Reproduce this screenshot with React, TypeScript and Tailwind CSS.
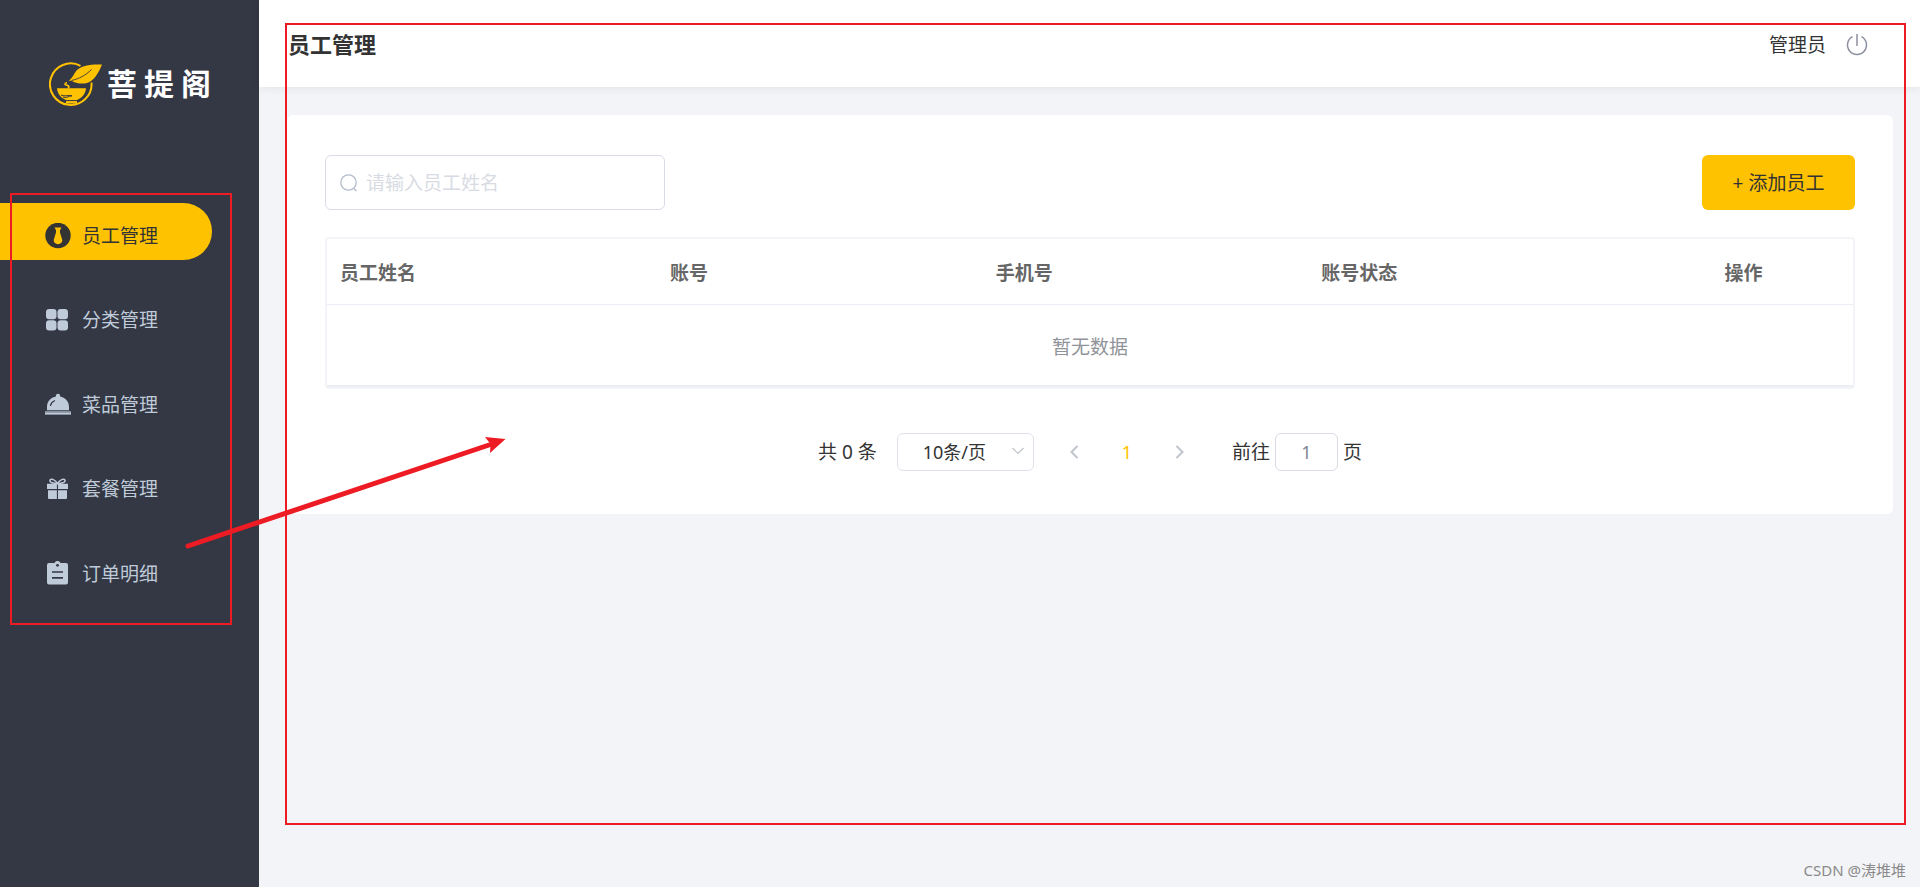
import { useState } from "react";

const menu = [
  { id: "member", name: "员工管理", icon: <TieIcon /> },
  { id: "category", name: "分类管理", icon: <GridIcon /> },
  { id: "food", name: "菜品管理", icon: <DishIcon /> },
  { id: "combo", name: "套餐管理", icon: <GiftIcon /> },
  { id: "order", name: "订单明细", icon: <OrderIcon /> },
];

function TieIcon() {
  return (
    <svg viewBox="0 0 26 26" className="size-[26px]">
      <circle cx="13" cy="12.5" r="12.7" fill="#333333" />
      <path
        d="M9.500 4.500h7l-1.500 2.800v2.200l2.300 7.500c.2 2-1.400 3.700-4.300 4.300-2.900-.6-4.500-2.300-4.300-4.300L11 9.500V7.300z"
        fill="#ffc200"
      />
    </svg>
  );
}

function GridIcon() {
  return (
    <svg viewBox="0 0 26 26" className="size-[26px]" fill="currentColor">
      <rect x="1" y="2" width="10.5" height="10.2" rx="3.2" />
      <rect x="12.5" y="2" width="10.5" height="10.2" rx="3.2" />
      <rect x="1" y="13.2" width="10.5" height="10.2" rx="3.2" />
      <rect x="12.5" y="13.2" width="10.5" height="10.2" rx="3.2" />
    </svg>
  );
}

function DishIcon() {
  return (
    <svg viewBox="0 0 26 26" className="size-[26px]" fill="currentColor">
      <path d="M11 4.500a2.100 2.100 0 1 1 4 0c5.200.9 9 4.900 9 10.500v3.300H2V15C2 9.400 5.800 5.400 11 4.500z" />
      <path d="M0 20.300h26v2.300H0z" />
      <path d="M0 19h26v1H0z" opacity=".6" />
      <path d="M5.500 13.500c.5-2.300 1.700-3.800 4-4.800" fill="none" stroke="#343744" strokeWidth="1.2" strokeLinecap="round" />
    </svg>
  );
}

function GiftIcon() {
  return (
    <svg viewBox="0 0 26 26" className="size-[26px]" fill="currentColor">
      <path
        d="M12.500 7.500C10.500 3.600 5.800 2 5 4.300c-.7 2.500 3.700 3.200 7.500 3.200 3.800 0 8.200-.7 7.500-3.200-.8-2.300-5.500-.7-7.500 3.200z"
        fill="none"
        stroke="currentColor"
        strokeWidth="1.5"
      />
      <path d="M2 7.800h9.900v5.200H2zM13 7.800h10v5.200H13zM3 14.200h8.900V23H4a1 1 0 0 1-1-1zM13 14.200h9V22a1 1 0 0 1-1 1h-8z" />
    </svg>
  );
}

function OrderIcon() {
  return (
    <svg viewBox="0 0 26 26" className="size-[26px]" fill="currentColor">
      <path d="M4 2h5.500a3.200 3.200 0 0 1 6 0H21a2 2 0 0 1 2 2v17.500a2 2 0 0 1-2 2H4a2 2 0 0 1-2-2V4a2 2 0 0 1 2-2z" />
      <circle cx="12.5" cy="4.3" r="1.4" fill="#343744" />
      <path d="M7 11h11M7 16.800h11" stroke="#343744" strokeWidth="1.7" />
    </svg>
  );
}

function Logo() {
  return (
    <div className="flex items-center">
      <svg viewBox="0 0 54 44" className="h-[44px] w-[54px]">
        <path
          d="M31.500 3.800A20.800 20.800 0 1 0 42.500 20.500"
          fill="none"
          stroke="#ffc200"
          strokeWidth="2"
        />
        <path
          d="M53 2.500C43 2 33 3 28 8c-3 3-3.500 7-8.500 11 2.500-.5 4 .3 6 1.300 4 1.500 8.500 1.500 12.500.7C45 19 49.500 11 53 2.500z"
          fill="#ffc200"
        />
        <path d="M22.500 18.500c7-1.500 14-5 20-11" fill="none" stroke="#343744" strokeWidth="0.9" />
        <path
          d="M18 20.500c-3 1-2.500 2.500.3 2.900 2 .4 2 1.600.7 3"
          fill="none"
          stroke="#ffc200"
          strokeWidth="1.7"
        />
        <path d="M8 26.300h29c-.4 5.300-3.600 9.500-9 11.700v3.500H17V38c-5.400-2.200-8.600-6.400-9-11.700z" fill="#ffc200" />
        <path d="M12 33c4 2.200 7.500-.5 11 .8-3.500.2-5.500 2.700-9 1.200M17 38.600h11" fill="none" stroke="#343744" strokeWidth="1" />
      </svg>
      <div className="ml-1 flex gap-[7px] text-[30px] leading-[44px] font-bold text-white">
        <span>菩</span>
        <span>提</span>
        <span>阁</span>
      </div>
    </div>
  );
}

// red frames and the arrow drawn over the page
function Marks() {
  return (
    <div className="pointer-events-none absolute inset-0">
      <div className="absolute top-[193px] left-[10px] h-[432px] w-[222px] border-2 border-[#ed1c24]" />
      <div className="absolute top-[23px] right-[14px] left-[285px] h-[802px] border-2 border-[#ed1c24]" />
      <svg viewBox="0 0 330 120" className="absolute top-[433px] left-[180px] h-[120px] w-[330px]">
        <path d="M8 113L309 12" stroke="#ed1c24" strokeWidth="5" strokeLinecap="round" />
        <path d="M325.500 6L305 4l5.500 7-.5 9z" fill="#ed1c24" />
      </svg>
      <p className="absolute right-[14px] bottom-[6px] text-[15px] leading-[22px] text-[#8a8a8a]">
        CSDN @涛堆堆
      </p>
    </div>
  );
}

const App = () => {
  const [active, setActive] = useState("member");
  const [name, setName] = useState("");
  const [page, setPage] = useState("1");

  return (
    <div className="relative flex min-h-screen bg-[#f3f4f7] font-['Noto_Sans','Noto_Sans_CJK_SC',sans-serif] text-[19px] leading-[28px] text-[#333333]">
      <aside className="w-[259px] shrink-0 bg-[#343744]">
        <div className="pt-[62px] pl-[49px]">
          <Logo />
        </div>
        <nav className="mt-[97px]">
          <ul className="flex h-[395px] flex-col justify-between">
            {menu.map((item) => (
              <li key={item.id}>
                <a
                  href={"#" + item.id}
                  onClick={() => setActive(item.id)}
                  className={
                    "flex h-[57px] w-[212px] items-center gap-[11px] rounded-r-full pt-2 pl-[45px] " +
                    (item.id === active ? "bg-[#ffc200] text-[#333333]" : "text-[#bfcbd9]")
                  }
                >
                  {item.icon}
                  <span>{item.name}</span>
                </a>
              </li>
            ))}
          </ul>
        </nav>
      </aside>

      <div className="min-w-0 flex-1">
        <header className="flex h-[87px] items-start justify-between bg-white pt-[31px] pr-[52px] pl-[29px] shadow-[0_2px_8px_rgba(0,0,0,0.06)]">
          <h1 className="text-[22px] leading-[26px] font-bold">员工管理</h1>
          <div className="flex items-center gap-5">
            <span>管理员</span>
            <button aria-label="退出">
              <svg viewBox="0 0 22 22" className="size-[22px]" fill="none" stroke="#8c8f9f" strokeWidth="1.5">
                <path d="M11 0v12M6.500 2.700a9.500 9.500 0 1 0 9 0" />
              </svg>
            </button>
          </div>
        </header>

        <main className="mt-7 mr-[27px] ml-7 rounded-md bg-white px-[38px] pt-10 pb-[43px]">
          <div className="flex justify-between">
            <label className="flex h-[55px] w-[340px] items-center gap-2 rounded-md border border-[#d8dce5] px-[14px]">
              <svg viewBox="0 0 18 18" className="size-[18px] shrink-0" fill="none" stroke="#b4bccc" strokeWidth="1.3">
                <circle cx="8.5" cy="8.5" r="7.7" />
                <path d="M13.500 14.200l3 2.800" />
              </svg>
              <input
                type="text"
                aria-label="员工姓名"
                placeholder="请输入员工姓名"
                value={name}
                onChange={(e) => setName(e.target.value)}
                className="w-full min-w-0 outline-none placeholder:text-[#d8dbe3]"
              />
            </label>
            <button className="h-[55px] w-[153px] rounded-md bg-[#ffc200]">+ 添加员工</button>
          </div>

          <div className="mt-[27px] rounded-sm border-2 border-[#f3f4f7]">
            <table className="w-full table-fixed border-b-2 border-[#ebeef5]">
              <thead>
                <tr className="h-[65px] border-b border-[#ebeef5] text-left text-[#666666]">
                  <th className="w-[330px] px-[13px] pt-1">员工姓名</th>
                  <th className="px-[13px] pt-1">账号</th>
                  <th className="px-[13px] pt-1">手机号</th>
                  <th className="px-[13px] pt-1">账号状态</th>
                  <th className="w-[219px] px-[13px] pt-1 text-center">操作</th>
                </tr>
              </thead>
              <tbody>
                <tr className="h-[82px]">
                  <td colSpan={5} className="pt-1 text-center text-[#909399]">
                    暂无数据
                  </td>
                </tr>
              </tbody>
            </table>
          </div>

          <div className="mt-[44px] flex h-[38px] items-center justify-center">
            <span>共 0 条</span>
            <div className="relative ml-5">
              <select
                aria-label="每页条数"
                className="h-[38px] w-[137px] appearance-none rounded-md border border-[#dfe2e8] bg-white pl-[25px] text-[18px] outline-none"
              >
                <option>10条/页</option>
                <option>20条/页</option>
                <option>30条/页</option>
                <option>40条/页</option>
              </select>
              <svg viewBox="0 0 12 8" className="pointer-events-none absolute top-[14px] right-[10px] h-2 w-3" fill="none" stroke="#c0c4cc" strokeWidth="1.2">
                <path d="M.5 1L6 6.500 11.500 1" />
              </svg>
            </div>
            <button aria-label="上一页" className="ml-9">
              <svg viewBox="0 0 9 14" className="h-[14px] w-[9px]" fill="none" stroke="#c0c4cc" strokeWidth="2">
                <path d="M7.500 1l-6 6 6 6" />
              </svg>
            </button>
            <button className="mx-[43px] text-[18px] text-[#ffc200]">1</button>
            <button aria-label="下一页">
              <svg viewBox="0 0 9 14" className="h-[14px] w-[9px]" fill="none" stroke="#c0c4cc" strokeWidth="2">
                <path d="M1.500 1l6 6-6 6" />
              </svg>
            </button>
            <label className="ml-12 flex items-center gap-[5px]">
              前往
              <input
                type="text"
                value={page}
                onChange={(e) => setPage(e.target.value)}
                className="h-[38px] w-[63px] rounded-md border border-[#d8dce5] text-center text-[18px] text-[#818693] outline-none"
              />
              页
            </label>
          </div>
        </main>
      </div>
      <Marks />
    </div>
  );
};

export default App;
